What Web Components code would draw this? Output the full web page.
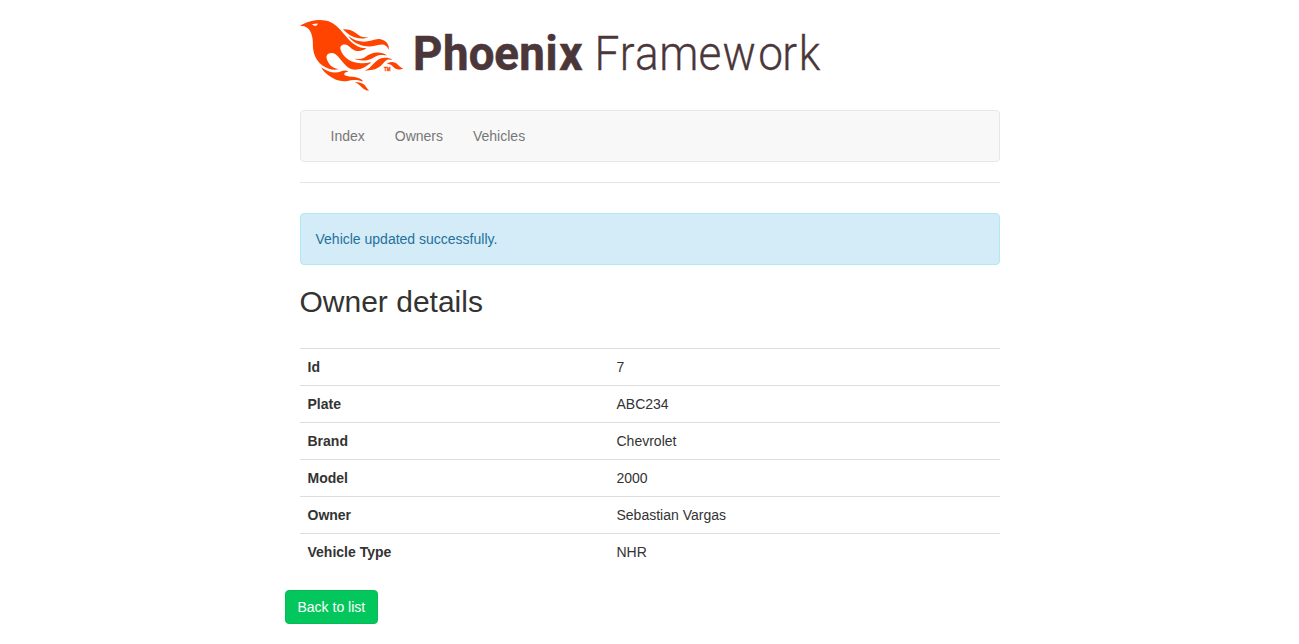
<!DOCTYPE html>
<html lang="en">
<head>
<meta charset="utf-8">
<title>Phoenix Framework</title>
<style>
body { margin: 0; background: #fff; color: #333; font: 14px/20px "Liberation Sans", Arial, sans-serif; }
</style>
</head>
<body>
<app-page>
  <phoenix-logo slot="header"></phoenix-logo>
  <nav-bar slot="header"><nav-item>Index</nav-item><nav-item>Owners</nav-item><nav-item>Vehicles</nav-item></nav-bar>
  <flash-alert>Vehicle updated successfully.</flash-alert>
  <page-title>Owner details</page-title>
  <detail-table>
    <detail-row label="Id">7</detail-row>
    <detail-row label="Plate">ABC234</detail-row>
    <detail-row label="Brand">Chevrolet</detail-row>
    <detail-row label="Model">2000</detail-row>
    <detail-row label="Owner">Sebastian Vargas</detail-row>
    <detail-row label="Vehicle Type">NHR</detail-row>
  </detail-table>
  <link-button slot="actions">Back to list</link-button>
</app-page>
<script>
const define = (name, markup, setup) => customElements.define(name, class extends HTMLElement {
  constructor() {
    super();
    this.attachShadow({ mode: "open" }).innerHTML = markup;
  }
  connectedCallback() { if (setup) setup(this); }
});

define("app-page", `<style>
:host { display: block; box-sizing: border-box; width: 730px; margin: 0 auto; padding-top: 20px; }
header, main { padding: 0 15px; }
header { border: 0; }
.rule { height: 1px; background: #e5e5e5; margin-bottom: 30px; }
footer { display: flex; margin-top: 20px; }
</style>
<header><slot name="header"></slot><div class="rule"></div></header>
<main><slot></slot></main>
<footer><slot name="actions"></slot></footer>`);

define("phoenix-logo", `<style>
:host { display: block; height: 71px; margin-bottom: 19px; }
svg { display: block; overflow: visible; }
text { font-family: Roboto, sans-serif; fill: #4b3639; }
.bold { font-weight: 700; stroke: #4b3639; stroke-width: .6px; }
.light { font-weight: 300; stroke: #4b3639; stroke-width: .3px; }
.mark { font: 700 5px "Liberation Sans", sans-serif; fill: #ff4400; stroke: #ff4400; stroke-width: .3px; }
</style>
<svg width="521" height="71" viewBox="0 0 521 71" role="img" aria-label="Phoenix Framework">
<path transform="scale(1.47)" fill="#ff4400" d="m26.371 33.477-.552-.1c-3.92-.729-6.397-3.1-7.57-6.829-.733-2.324.597-4.035 3.035-4.148 1.995-.092 3.362 1.055 4.57 2.39 1.557 1.72 2.984 3.558 4.514 5.305 2.202 2.515 4.797 4.134 8.347 3.634 3.183-.448 5.958-1.725 8.371-3.828.363-.316.761-.592 1.144-.886l-.241-.284c-2.027.63-4.093.841-6.205.735-3.195-.16-6.24-.828-8.964-2.582-2.486-1.601-4.319-3.746-5.19-6.611-.704-2.315.736-3.934 3.135-3.6.948.133 1.746.56 2.463 1.165.583.493 1.143 1.015 1.738 1.493 2.8 2.25 6.712 2.375 10.265-.068-5.842-.026-9.817-3.24-13.308-7.313-1.366-1.594-2.7-3.216-4.095-4.785-2.698-3.036-5.692-5.71-9.79-6.623C12.8-.623 7.745.14 2.893 2.361 1.926 2.804.997 3.319 0 4.149c.494 0 .763.006 1.032 0 2.446-.064 4.28 1.023 5.602 3.024.962 1.457 1.415 3.104 1.761 4.798.513 2.515.247 5.078.544 7.605.761 6.494 4.08 11.026 10.26 13.346 2.267.852 4.591 1.135 7.172.555ZM10.751 3.852c-.976.246-1.756-.148-2.56-.962 1.377-.343 2.592-.476 3.897-.528-.107.848-.607 1.306-1.336 1.49Zm32.002 37.924c-.085-.626-.62-.901-1.04-1.228-1.857-1.446-4.03-1.958-6.333-2-1.375-.026-2.735-.128-4.031-.61-.595-.22-1.26-.505-1.244-1.272.015-.78.693-1 1.31-1.184.505-.15 1.026-.247 1.6-.382-1.46-.936-2.886-1.065-4.787-.3-2.993 1.202-5.943 1.06-8.926-.017-1.684-.608-3.179-1.563-4.735-2.408l-.043.03a2.96 2.96 0 0 0 .04-.029c-.038-.117-.107-.12-.197-.054l.122.107c1.29 2.115 3.034 3.817 5.004 5.271 3.793 2.8 7.936 4.471 12.784 3.73A66.714 66.714 0 0 1 37 40.877c1.98-.16 3.866.398 5.753.899Zm-9.14-30.345c-.105-.076-.206-.266-.42-.069 1.745 2.36 3.985 4.098 6.683 5.193 4.354 1.767 8.773 2.07 13.293.51 3.51-1.21 6.033-.028 7.343 3.38.19-3.955-2.137-6.837-5.843-7.401-2.084-.318-4.01.373-5.962.94-5.434 1.575-10.485.798-15.094-2.553Zm27.085 15.425c.708.059 1.416.123 2.124.185-1.6-1.405-3.55-1.517-5.523-1.404-3.003.17-5.167 1.903-7.14 3.972-1.739 1.824-3.31 3.87-5.903 4.604.043.078.054.117.066.117.35.005.699.021 1.047.005 3.768-.17 7.317-.965 10.14-3.7.89-.86 1.685-1.817 2.544-2.71.716-.746 1.584-1.159 2.645-1.07Zm-8.753-4.67c-2.812.246-5.254 1.409-7.548 2.943-1.766 1.18-3.654 1.738-5.776 1.37-.374-.066-.75-.114-1.124-.17l-.013.156c.135.07.265.151.405.207.354.14.702.308 1.07.395 4.083.971 7.992.474 11.516-1.803 2.221-1.435 4.521-1.707 7.013-1.336.252.038.503.083.756.107.234.022.479.255.795.003-2.179-1.574-4.526-2.096-7.094-1.872Zm-10.049-9.544c1.475.051 2.943-.142 4.486-1.059-.452.04-.643.04-.827.076-2.126.424-4.033-.04-5.733-1.383-.623-.493-1.257-.974-1.889-1.457-2.503-1.914-5.374-2.555-8.514-2.5.05.154.054.26.108.315 3.417 3.455 7.371 5.836 12.369 6.008Zm24.727 17.731c-2.114-2.097-4.952-2.367-7.578-.537 1.738.078 3.043.632 4.101 1.728a13 13 0 0 0 1.182 1.106c1.6 1.29 4.311 1.352 5.896.155-1.861-.726-1.861-.726-3.601-2.452Zm-21.058 16.06c-1.858-3.46-4.981-4.24-8.59-4.008a9.667 9.667 0 0 1 2.977 1.39c.84.586 1.547 1.311 2.243 2.055 1.38 1.473 3.534 2.376 4.962 2.07-.656-.412-1.238-.848-1.592-1.507Z"/>
<text class="mark" x="84" y="51.3" textLength="6.5" lengthAdjust="spacingAndGlyphs">TM</text>
<text class="bold" transform="scale(.95 1)" x="118.9 150.6 177.7 204.5 230.7 258.3 272.8" y="50" font-size="48">Phoenix</text>
<text class="light" transform="scale(.92 1)" x="320 347.5 364.1 390.5 433.2 459.2 498.2 524.2 542" y="50" font-size="48">Framework</text>
</svg>`);

define("nav-bar", `<style>
:host { display: flex; box-sizing: border-box; height: 52px; padding: 0 15px; margin-bottom: 20px; background: #f8f8f8; border: 1px solid #e7e7e7; border-radius: 4px; }
</style><slot></slot>`);

define("nav-item", `<style>
:host { display: block; padding: 15px; color: #777; }
</style><slot></slot>`);

define("flash-alert", `<style>
:host { display: block; padding: 15px; margin-bottom: 20px; color: #24719a; background: #d4ebf8; border: 1px solid #b2e8f4; border-radius: 4px; }
</style><slot></slot>`);

define("page-title", `<style>
:host { display: block; margin-bottom: 30px; }
h2 { margin: 0; font-size: 30px; font-weight: 500; line-height: 33px; }
</style><h2><slot></slot></h2>`);

define("detail-table", `<style>:host { display: block; }</style><slot></slot>`);

define("detail-row", `<style>
:host { display: grid; grid-template-columns: 309px 1fr; border-top: 1px solid #ddd; }
b, span { padding: 8px; }
</style><b></b><span><slot></slot></span>`, el => {
  el.shadowRoot.querySelector("b").textContent = el.getAttribute("label");
});

define("link-button", `<style>
:host { display: block; padding: 6px 12px; color: #fff; background: #03c75c; border: 1px solid #04bb56; border-radius: 4px; }
</style><slot></slot>`);
</script>
</body>
</html>
